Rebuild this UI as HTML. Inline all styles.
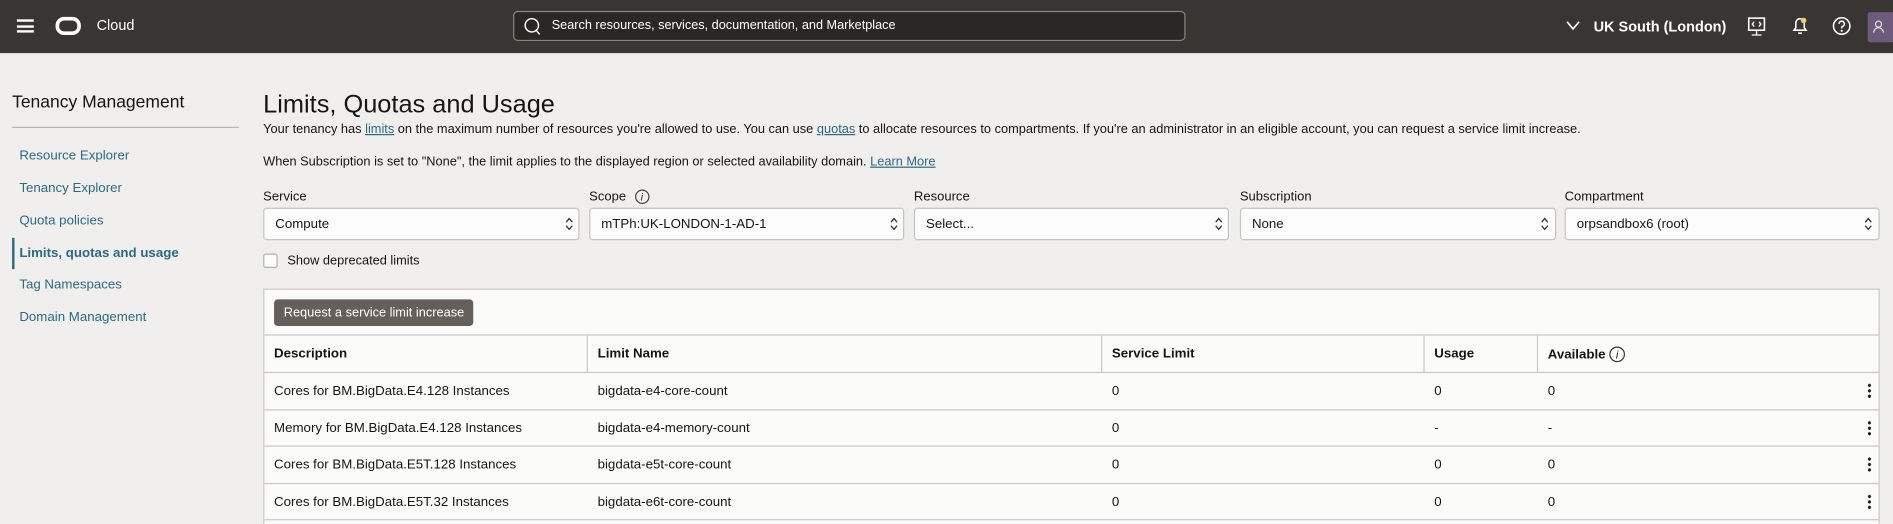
<!DOCTYPE html>
<html><head><meta charset="utf-8"><style>
*{box-sizing:border-box;margin:0;padding:0}
html,body{width:1893px;height:524px;overflow:hidden;background:#f1efed}
#w{width:1568px;height:434px;overflow:hidden;transform:scale(1.20727);transform-origin:0 0;position:relative;font-family:"Liberation Sans",sans-serif;color:#161513;font-size:11px;background:#f1efed}
.a{position:absolute;white-space:nowrap}
#top{position:absolute;left:0;top:0;width:1568px;height:44px;background:#383532}
.lnk{color:#2b6a80}
.sel{position:absolute;top:172px;height:27px;background:#fcfcfc;border:1px solid #c7c3bf;border-radius:3px;padding:7px 9px;font-size:11px}
.lbl{position:absolute;top:157px;font-size:10.8px}
#tbl{position:absolute;left:218px;top:239px;width:1339px;height:195px;background:#fbfbfa;border:1px solid #cbc7c3;border-bottom:none}
.row{position:absolute;left:0;width:1337px;height:31px;border-top:1px solid #cbc7c3}
.row span{position:absolute;top:9px}
.hd span{font-weight:bold}
.keb{position:absolute;left:1328px;top:8px;width:3px;height:13px;background:radial-gradient(circle,#161513 1.2px,transparent 1.4px) 0 0/3px 4.5px}
</style></head><body><div id="w">
<div id="top">
 <div class="a" style="left:14px;top:16px;width:14px;height:11px;border-top:2px solid #fff;border-bottom:2px solid #fff"><div style="margin-top:2.5px;height:2px;background:#fff"></div></div>
 <div class="a" style="left:46px;top:14px;width:21px;height:15px;border:3px solid #fff;border-radius:7px"></div>
 <div class="a" style="left:80px;top:14px;color:#fff;font-size:12px">Cloud</div>
 <div class="a" style="left:425px;top:9px;width:557px;height:25px;border:1px solid #8a8580;border-radius:4px;background:#2a2725"></div>
 <svg class="a" style="left:433px;top:13px" width="16" height="18" viewBox="0 0 16 18"><circle cx="7.5" cy="8" r="5.5" fill="none" stroke="#fff" stroke-width="1.2"/><line x1="11.5" y1="12.5" x2="14" y2="15.5" stroke="#fff" stroke-width="1.2"/></svg>
 <div class="a" style="left:457px;top:15px;color:#fff;font-size:10.5px">Search resources, services, documentation, and Marketplace</div>
 <svg class="a" style="left:1297px;top:17px" width="12" height="9"><path d="M1 1l5 6 5-6" fill="none" stroke="#fff" stroke-width="1.4"/></svg>
 <div class="a" style="left:1320px;top:15px;color:#fff;font-size:12px;font-weight:bold">UK South (London)</div>
 <svg class="a" style="left:1447px;top:13px" width="16" height="18"><rect x="1.5" y="2" width="13" height="10" fill="none" stroke="#fff" stroke-width="1.3"/><path d="M8 12v4M4 16h8M6 5l-1.5 2 1.5 2M10 5l1.5 2-1.5 2" fill="none" stroke="#fff" stroke-width="1.1"/></svg>
 <svg class="a" style="left:1483px;top:12px" width="16" height="18"><path d="M3 13h10l-1.5-2V7a3.5 3.5 0 0 0-7 0v4z" fill="none" stroke="#fff" stroke-width="1.3"/><path d="M6.5 15.5h3" stroke="#fff" stroke-width="1.3"/><circle cx="11" cy="5" r="2.3" fill="#f0cc71"/></svg>
 <svg class="a" style="left:1517px;top:13px" width="17" height="17"><circle cx="8.5" cy="8.5" r="6.8" fill="none" stroke="#fff" stroke-width="1.3"/><path d="M6.3 6.8a2.2 2.2 0 1 1 3 2c-.8.4-.8.9-.8 1.7" fill="none" stroke="#fff" stroke-width="1.3"/><circle cx="8.5" cy="12.5" r=".9" fill="#fff"/></svg>
 <div class="a" style="left:1547px;top:10px;width:22px;height:25px;background:#6e5a7a;border-radius:2px"></div>
 <svg class="a" style="left:1551px;top:16px" width="10" height="12"><circle cx="5" cy="4" r="2.5" fill="none" stroke="#ddd" stroke-width="1"/><path d="M1 11a4 4 0 0 1 8 0" fill="none" stroke="#ddd" stroke-width="1"/></svg>
</div>

<div class="a" style="left:10px;top:77px;font-size:14.5px">Tenancy Management</div>
<div class="a" style="left:10px;top:105px;width:188px;height:1px;background:#b8b2ac"></div>
<div class="a lnk" style="left:16px;top:123px">Resource Explorer</div>
<div class="a lnk" style="left:16px;top:150px">Tenancy Explorer</div>
<div class="a lnk" style="left:16px;top:177px">Quota policies</div>
<div class="a" style="left:10px;top:197px;width:2px;height:26px;background:#2b6a80"></div>
<div class="a lnk" style="left:16px;top:204px;font-weight:bold">Limits, quotas and usage</div>
<div class="a lnk" style="left:16px;top:230px">Tag Namespaces</div>
<div class="a lnk" style="left:16px;top:257px">Domain Management</div>

<div class="a" style="left:218px;top:75px;font-size:21px">Limits, Quotas and Usage</div>
<div class="a" style="left:218px;top:101px;font-size:10.6px">Your tenancy has <u class="lnk">limits</u> on the maximum number of resources you're allowed to use. You can use <u class="lnk">quotas</u> to allocate resources to compartments. If you're an administrator in an eligible account, you can request a service limit increase.</div>
<div class="a" style="left:218px;top:128px;font-size:10.6px">When Subscription is set to "None", the limit applies to the displayed region or selected availability domain. <u class="lnk">Learn More</u></div>

<div class="lbl" style="left:218px">Service</div>
<div class="lbl" style="left:488px">Scope <span style="display:inline-block;width:12px;height:12px;border:1px solid #444;border-radius:50%;font-size:8px;text-align:center;line-height:11px;font-style:italic;margin-left:4px">i</span></div>
<div class="lbl" style="left:757px">Resource</div>
<div class="lbl" style="left:1027px">Subscription</div>
<div class="lbl" style="left:1296px">Compartment</div>
<div class="sel" style="left:218px;width:262px">Compute</div>
<div class="sel" style="left:488px;width:261px">mTPh:UK-LONDON-1-AD-1</div>
<div class="sel" style="left:757px;width:261px">Select...</div>
<div class="sel" style="left:1027px;width:262px">None</div>
<div class="sel" style="left:1296px;width:261px">orpsandbox6 (root)</div>
<svg class="a" style="left:468px;top:179px" width="7" height="13"><path d="M1 5l2.5-3 2.5 3M1 8l2.5 3 2.5-3" fill="none" stroke="#333" stroke-width="1.1"/></svg>
<svg class="a" style="left:737px;top:179px" width="7" height="13"><path d="M1 5l2.5-3 2.5 3M1 8l2.5 3 2.5-3" fill="none" stroke="#333" stroke-width="1.1"/></svg>
<svg class="a" style="left:1006px;top:179px" width="7" height="13"><path d="M1 5l2.5-3 2.5 3M1 8l2.5 3 2.5-3" fill="none" stroke="#333" stroke-width="1.1"/></svg>
<svg class="a" style="left:1276px;top:179px" width="7" height="13"><path d="M1 5l2.5-3 2.5 3M1 8l2.5 3 2.5-3" fill="none" stroke="#333" stroke-width="1.1"/></svg>
<svg class="a" style="left:1544px;top:179px" width="7" height="13"><path d="M1 5l2.5-3 2.5 3M1 8l2.5 3 2.5-3" fill="none" stroke="#333" stroke-width="1.1"/></svg>

<div class="a" style="left:218px;top:210px;width:12px;height:12px;border:1px solid #b5b0ab;border-radius:2px;background:#fcfcfc"></div>
<div class="a" style="left:238px;top:210px;font-size:10.6px">Show deprecated limits</div>

<div id="tbl">
 <div class="a" style="left:8px;top:8px;width:165px;height:22px;background:#645f5b;border-radius:3px;color:#fff;font-size:10.6px;padding:5px 0 0 8px">Request a service limit increase</div>
 <div class="row hd" style="top:37px;height:31px"><span style="left:8px">Description</span><span style="left:276px">Limit Name</span><span style="left:702px">Service Limit</span><span style="left:969px">Usage</span><span style="left:1063px">Available <span style="display:inline-block;width:13px;height:13px;border:1px solid #333;border-radius:50%;font-size:9px;text-align:center;line-height:12px;font-style:italic;font-weight:normal;position:static">i</span></span>
  <div class="a" style="left:267px;top:0;width:1px;height:30px;background:#cbc7c3"></div>
  <div class="a" style="left:693px;top:0;width:1px;height:30px;background:#cbc7c3"></div>
  <div class="a" style="left:960px;top:0;width:1px;height:30px;background:#cbc7c3"></div>
  <div class="a" style="left:1054px;top:0;width:1px;height:30px;background:#cbc7c3"></div>
 </div>
 <div class="row" style="top:68px"><span style="left:8px">Cores for BM.BigData.E4.128 Instances</span><span style="left:276px">bigdata-e4-core-count</span><span style="left:702px">0</span><span style="left:969px">0</span><span style="left:1063px">0</span><i class="keb"></i></div>
 <div class="row" style="top:99px"><span style="left:8px">Memory for BM.BigData.E4.128 Instances</span><span style="left:276px">bigdata-e4-memory-count</span><span style="left:702px">0</span><span style="left:969px">-</span><span style="left:1063px">-</span><i class="keb"></i></div>
 <div class="row" style="top:129px"><span style="left:8px">Cores for BM.BigData.E5T.128 Instances</span><span style="left:276px">bigdata-e5t-core-count</span><span style="left:702px">0</span><span style="left:969px">0</span><span style="left:1063px">0</span><i class="keb"></i></div>
 <div class="row" style="top:160px"><span style="left:8px">Cores for BM.BigData.E5T.32 Instances</span><span style="left:276px">bigdata-e6t-core-count</span><span style="left:702px">0</span><span style="left:969px">0</span><span style="left:1063px">0</span><i class="keb"></i></div>
 <div class="row" style="top:190px;height:4px"></div>
</div>
</div></body></html>
